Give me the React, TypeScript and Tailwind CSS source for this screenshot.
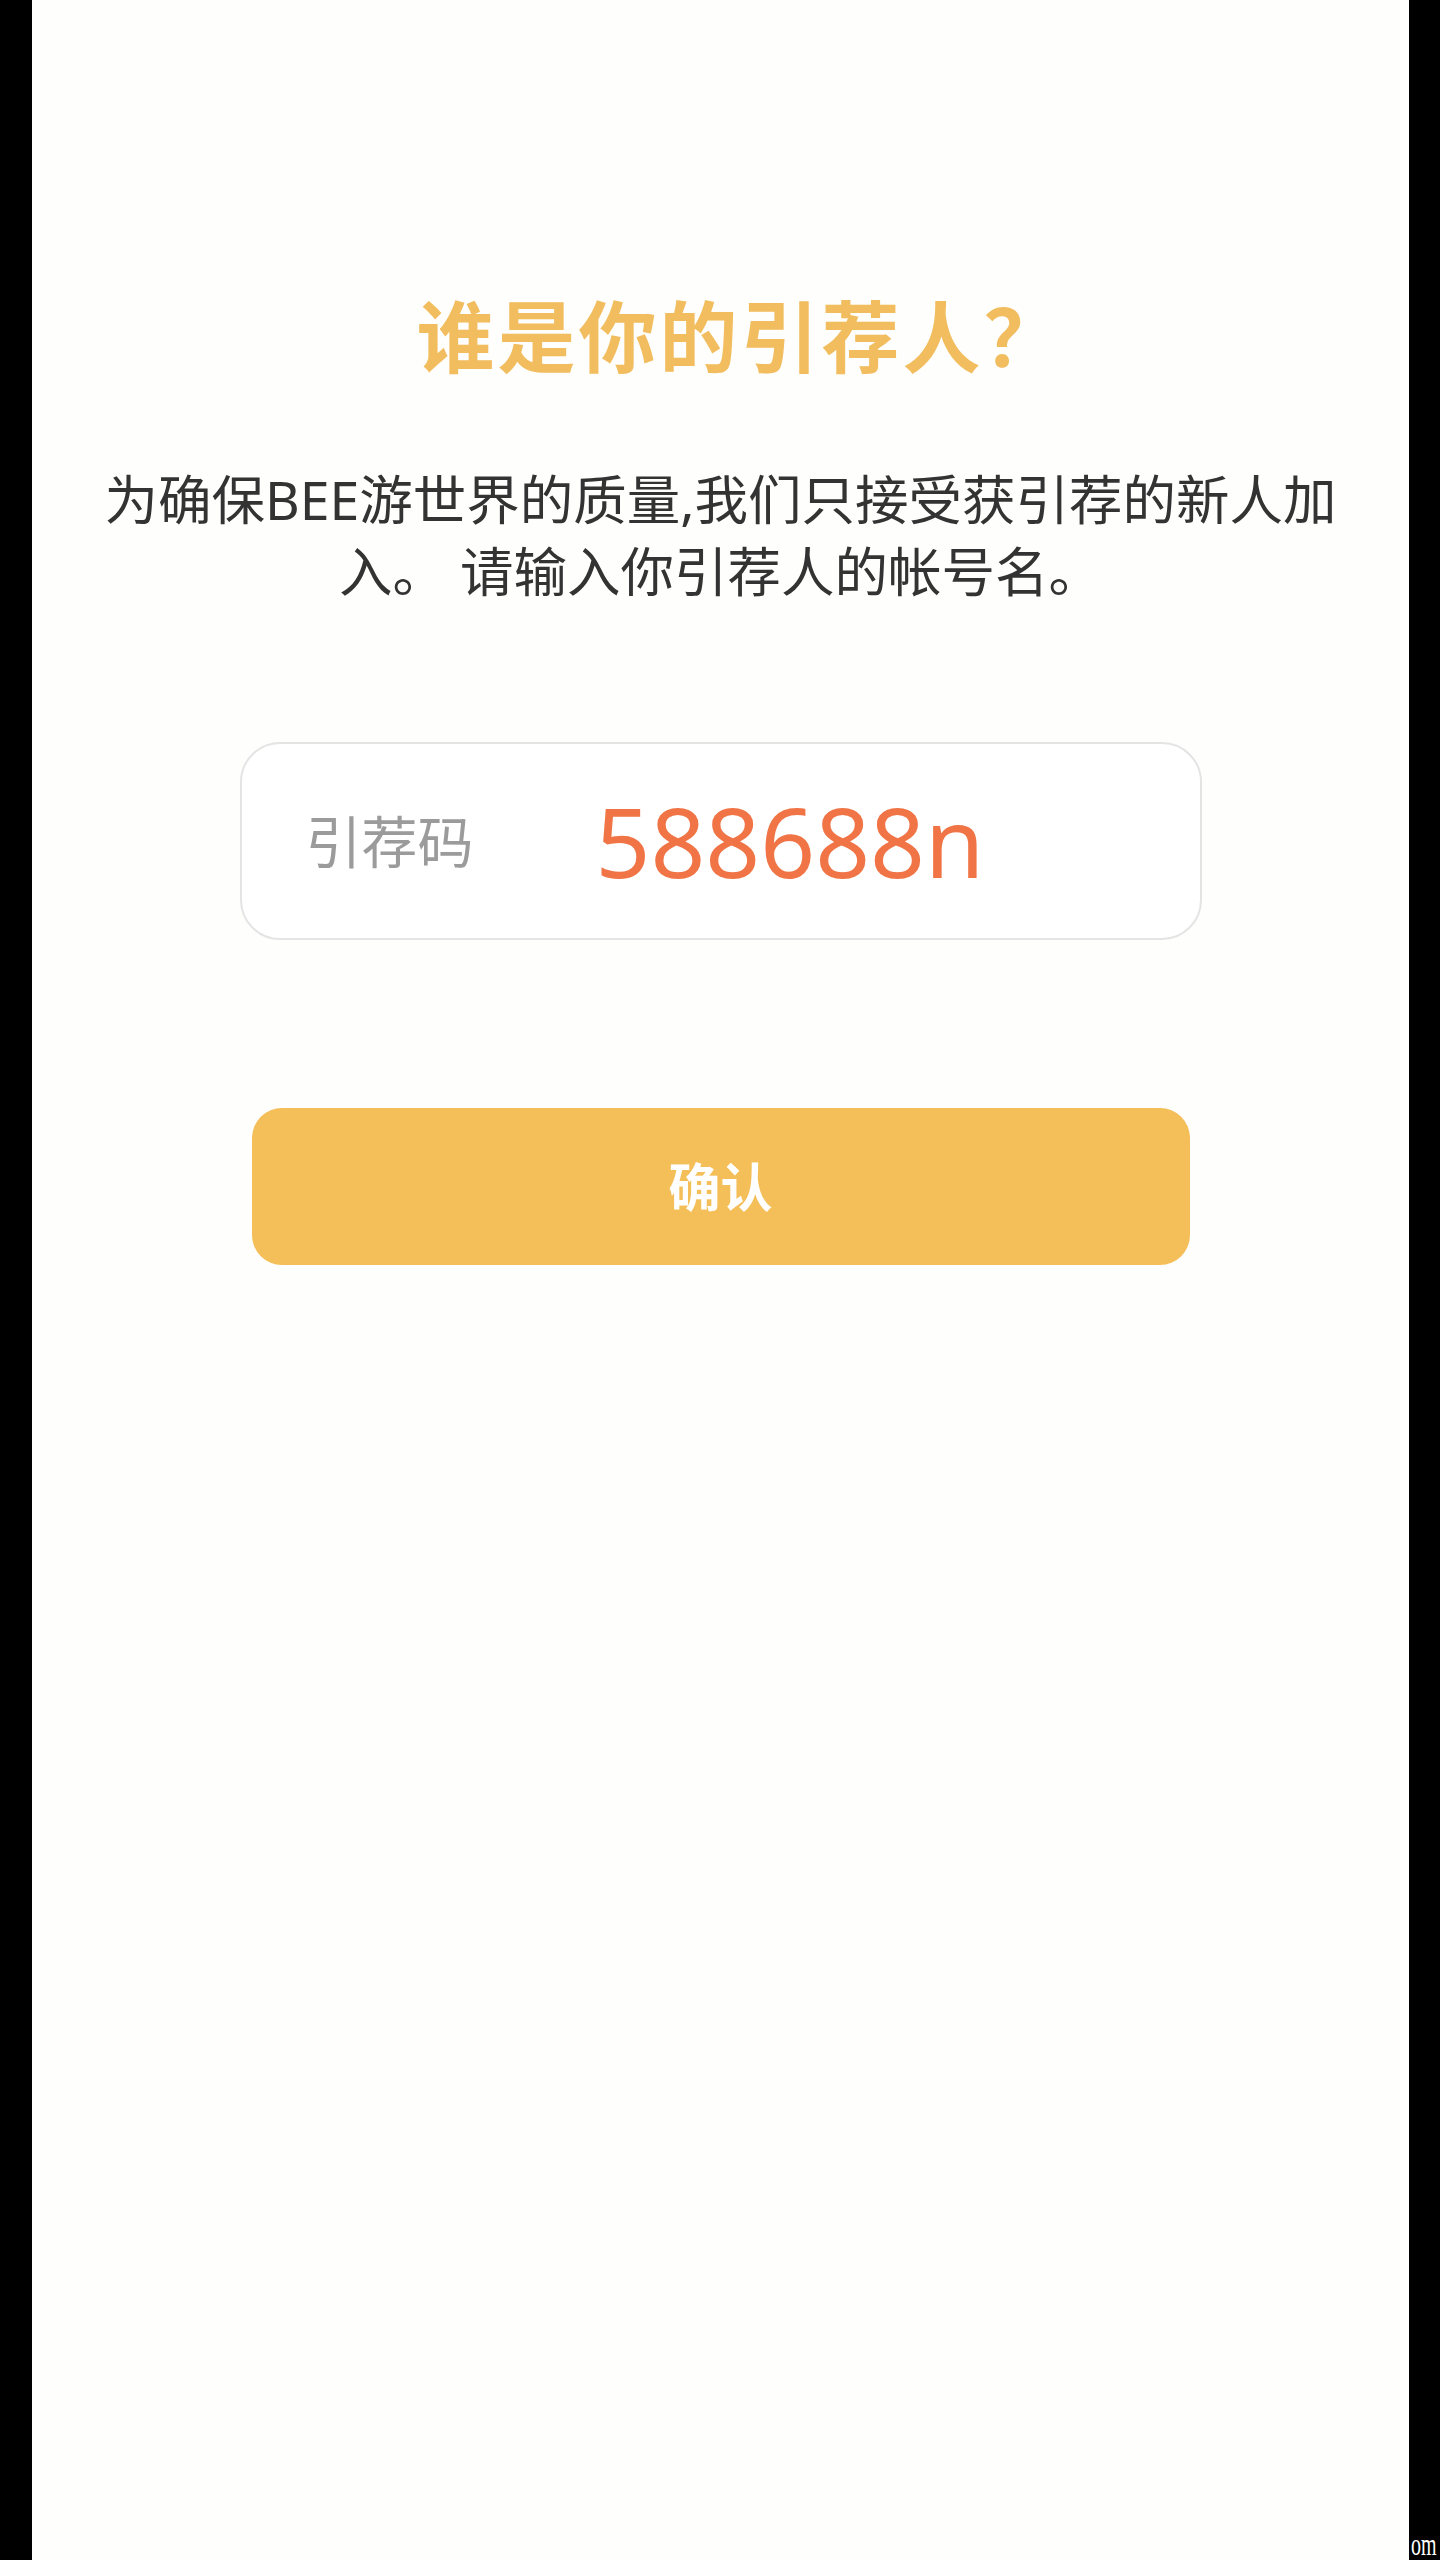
export default function App() {
  return (
    <div className="flex h-[2560px] w-full bg-black font-['Noto_Sans','Noto_Sans_CJK_SC',sans-serif]">
      <div className="w-[32px] shrink-0 bg-black" />

      <main className="flex flex-1 flex-col items-center bg-[#fefefd]">
        <h1 className="pl-[40px] pt-[298px] text-[78px] font-bold leading-none tracking-[3px] text-[#f2bd5e]">
          谁是你的引荐人？
        </h1>

        <p className="mt-[88px] text-center text-[53.5px] leading-[72px] text-[#333333]">
          为确保BEE游世界的质量,我们只接受获引荐的新人加
          <br />
          入。 请输入你引荐人的帐号名。
        </p>

        <div className="mt-[134px] flex h-[198px] w-[962px] items-center rounded-[40px] border-2 border-[#e4e4e4] bg-white pl-[64px]">
          <span className="w-[290px] text-[56px] text-[#9b9b9b]">引荐码</span>
          <span className="text-[96px] leading-none text-[#f07446]">588688n</span>
        </div>

        <button className="mt-[168px] flex h-[157px] w-[938px] items-center justify-center rounded-[30px] bg-[#f4bf59] text-[52px] font-bold text-white">
          确认
        </button>
      </main>

      <div className="relative w-[31px] shrink-0 bg-black">
        <span className="absolute bottom-0 left-[2px] origin-bottom scale-y-[1.6] font-['Liberation_Serif',serif] text-[20px] leading-none text-white">
          om
        </span>
      </div>
    </div>
  );
}
